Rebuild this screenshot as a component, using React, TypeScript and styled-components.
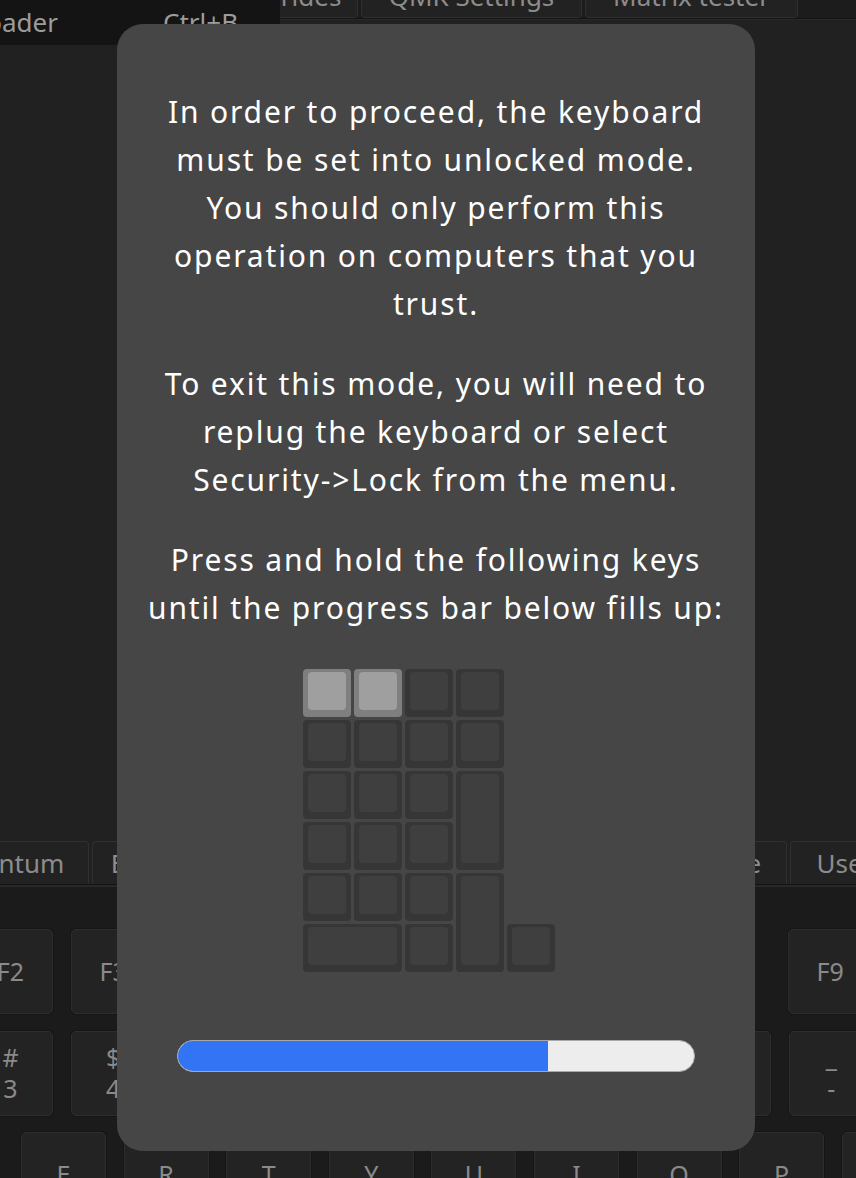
import React from "react";
import styled, { createGlobalStyle } from "styled-components";

const GlobalStyle = createGlobalStyle`
  html, body { margin: 0; padding: 0; background: #212121; }
  body { width: 856px; height: 1178px; overflow: hidden; }
`;

const Screen = styled.div`
  position: relative;
  width: 856px;
  height: 1178px;
  overflow: hidden;
  display: flex;
  flex-direction: column;
  background: #212121;
  font-family: "Noto Sans", "DejaVu Sans", sans-serif;
  color: #8c8c8c;
`;

const TopBar = styled.div`
  flex: none;
  height: 18px;
  background: #1c1c1c;
  border-bottom: 1px solid #141414;
  display: flex;
  align-items: flex-start;
  gap: 3px;
  padding-left: 155px;
  overflow: hidden;
`;

const TopTab = styled.div<{ $w: number }>`
  flex: none;
  width: ${(p) => p.$w}px;
  height: 41px;
  margin-top: -23px;
  box-sizing: border-box;
  background: #222222;
  border: 1px solid #2f2f2f;
  border-radius: 0 0 4px 4px;
  font-size: 26px;
  line-height: 36px;
  text-align: center;
  white-space: nowrap;
  color: #8c8c8c;
`;

const Workspace = styled.div`
  flex: none;
  height: 821px;
  border-top: 1px solid #2a2a2a;
  background: #212121;
`;

const BottomTabBar = styled.div`
  flex: none;
  height: 43px;
  margin-left: -77px;
  display: flex;
  gap: 3px;
  border-bottom: 1px solid #141414;
`;

const BottomTab = styled.div<{ $w: number }>`
  flex: none;
  width: ${(p) => p.$w}px;
  box-sizing: border-box;
  background: #222222;
  border: 1px solid #303030;
  border-bottom: none;
  border-radius: 4px 4px 0 0;
  display: flex;
  align-items: center;
  justify-content: center;
  font-size: 26px;
  white-space: nowrap;
  color: #8c8c8c;
`;

const KeyboardArea = styled.div`
  flex: 1;
  background: #1b1b1b;
  border-top: 2px solid #282828;
  padding-top: 42px;
  display: flex;
  flex-direction: column;
  gap: 16.5px;
`;

const KeyRow = styled.div<{ $offset: number }>`
  display: flex;
  gap: 17.6px;
  margin-left: ${(p) => p.$offset}px;
`;

const RowGap = styled.div<{ $w: number }>`
  flex: none;
  width: ${(p) => p.$w}px;
`;

const Key = styled.div`
  flex: none;
  width: 85px;
  height: 85px;
  box-sizing: border-box;
  background: #232323;
  border: 1px solid #2e2e2e;
  border-radius: 5px;
  box-shadow: 0 0 0 1px #151515;
  display: flex;
  flex-direction: column;
  align-items: center;
  justify-content: center;
  font-size: 25px;
  line-height: 31px;
  color: #8a8a8a;
  white-space: pre;
  text-align: center;
`;

const Menu = styled.div`
  position: absolute;
  left: 0;
  top: 0;
  width: 280px;
  height: 45px;
  box-sizing: border-box;
  padding-top: 4px;
  background: #141414;
  display: flex;
  align-items: flex-start;
  font-size: 26px;
  line-height: 36px;
  color: #9c9c9c;
`;

const MenuLabel = styled.div`
  flex: none;
  width: 58px;
  display: flex;
  justify-content: flex-end;
  white-space: nowrap;
`;

const MenuShortcut = styled.span`
  margin-left: 105px;
  white-space: nowrap;
`;

const Dialog = styled.div`
  position: absolute;
  left: 117px;
  top: 24px;
  width: 638px;
  height: 1127px;
  box-sizing: border-box;
  padding-top: 63.5px;
  background: #464646;
  border-radius: 26px;
  display: flex;
  flex-direction: column;
  align-items: center;
  font-family: "Noto Sans", "Noto Sans CJK JP", sans-serif;
  color: #ffffff;
`;

const Messages = styled.div`
  display: flex;
  flex-direction: column;
  gap: 32px;
`;

const Message = styled.p`
  margin: 0;
  font-size: 30px;
  line-height: 48px;
  letter-spacing: 1.85px;
  text-align: center;
  white-space: nowrap;
`;

const Matrix = styled.div`
  margin-top: 37.1px;
  padding-right: 14px;
  display: grid;
  grid-template-columns: repeat(5, 48px);
  grid-auto-rows: 48px;
  gap: 3px;
`;

const Cap = styled.div<{ $c: number; $r: number; $w: number; $h: number; $on: boolean }>`
  grid-column: ${(p) => p.$c} / span ${(p) => p.$w};
  grid-row: ${(p) => p.$r} / span ${(p) => p.$h};
  box-sizing: border-box;
  padding: 3px 5px 7px;
  border-radius: 4px;
  background: ${(p) => (p.$on ? "#7f7f7f" : "#363636")};
  display: flex;
`;

const CapTop = styled.div<{ $on: boolean }>`
  flex: 1;
  border-radius: 4px;
  background: ${(p) => (p.$on ? "#9f9f9f" : "#3f3f3f")};
`;

const Progress = styled.div`
  margin-top: 68px;
  width: 518px;
  height: 32px;
  box-sizing: border-box;
  border-radius: 16px;
  border: 1px solid #a9a9a9;
  background: #ededed;
  overflow: hidden;
  display: flex;
`;

const ProgressFill = styled.div`
  height: 100%;
  background: #3274f3;
`;

type CapDef = { c: number; r: number; w?: number; h?: number; on?: boolean };

const caps: CapDef[] = [
  { c: 1, r: 1, on: true },
  { c: 2, r: 1, on: true },
  { c: 3, r: 1 },
  { c: 4, r: 1 },
  { c: 1, r: 2 },
  { c: 2, r: 2 },
  { c: 3, r: 2 },
  { c: 4, r: 2 },
  { c: 1, r: 3 },
  { c: 2, r: 3 },
  { c: 3, r: 3 },
  { c: 4, r: 3, h: 2 },
  { c: 1, r: 4 },
  { c: 2, r: 4 },
  { c: 3, r: 4 },
  { c: 1, r: 5 },
  { c: 2, r: 5 },
  { c: 3, r: 5 },
  { c: 4, r: 5, h: 2 },
  { c: 1, r: 6, w: 2 },
  { c: 3, r: 6 },
  { c: 5, r: 6 },
];

const topTabs = [
  { label: "Key Overrides", w: 203 },
  { label: "QMK Settings", w: 221 },
  { label: "Matrix tester", w: 213 },
];

const bottomTabs = [
  { label: "Quantum", w: 166 },
  { label: "Backlight", w: 150 },
  { label: "App, Media and Mouse", w: 361 },
  { label: "Tap Dance", w: 178 },
  { label: "User", w: 110 },
  { label: "Macro", w: 120 },
];

const numberRow = ["#\n3", "$\n4", "%\n5", "^\n6", "&\n7", "*\n8", "(\n9", ")\n0", "_\n-", "+\n="];
const letterRow = ["E", "R", "T", "Y", "U", "I", "O", "P", "{\n["];

const progress = 0.718;

export default function App() {
  return (
    <>
      <GlobalStyle />
      <Screen>
        <TopBar>
          {topTabs.map((t) => (
            <TopTab key={t.label} $w={t.w}>
              {t.label}
            </TopTab>
          ))}
        </TopBar>
        <Workspace />
        <BottomTabBar>
          {bottomTabs.map((t) => (
            <BottomTab key={t.label} $w={t.w}>
              {t.label}
            </BottomTab>
          ))}
        </BottomTabBar>
        <KeyboardArea>
          <KeyRow $offset={-32}>
            <Key>F2</Key>
            <Key>F3</Key>
            <Key>F4</Key>
            <Key>F5</Key>
            <RowGap $w={10} />
            <Key>F6</Key>
            <Key>F7</Key>
            <Key>F8</Key>
            <RowGap $w={56.4} />
            <Key>F9</Key>
          </KeyRow>
          <KeyRow $offset={-32}>
            {numberRow.map((k) => (
              <Key key={k}>{k}</Key>
            ))}
          </KeyRow>
          <KeyRow $offset={21}>
            {letterRow.map((k) => (
              <Key key={k}>{k}</Key>
            ))}
          </KeyRow>
        </KeyboardArea>

        <Menu>
          <MenuLabel>
            <span>Reboot to bootloader</span>
          </MenuLabel>
          <MenuShortcut>Ctrl+B</MenuShortcut>
        </Menu>

        <Dialog>
          <Messages>
            <Message>
              In order to proceed, the keyboard
              <br />
              must be set into unlocked mode.
              <br />
              You should only perform this
              <br />
              operation on computers that you
              <br />
              trust.
            </Message>
            <Message>
              To exit this mode, you will need to
              <br />
              replug the keyboard or select
              <br />
              Security-&gt;Lock from the menu.
            </Message>
            <Message>
              Press and hold the following keys
              <br />
              until the progress bar below fills up:
            </Message>
          </Messages>
          <Matrix>
            {caps.map((k, i) => (
              <Cap key={i} $c={k.c} $r={k.r} $w={k.w ?? 1} $h={k.h ?? 1} $on={!!k.on}>
                <CapTop $on={!!k.on} />
              </Cap>
            ))}
          </Matrix>
          <Progress>
            <ProgressFill style={{ width: `${progress * 100}%` }} />
          </Progress>
        </Dialog>
      </Screen>
    </>
  );
}
